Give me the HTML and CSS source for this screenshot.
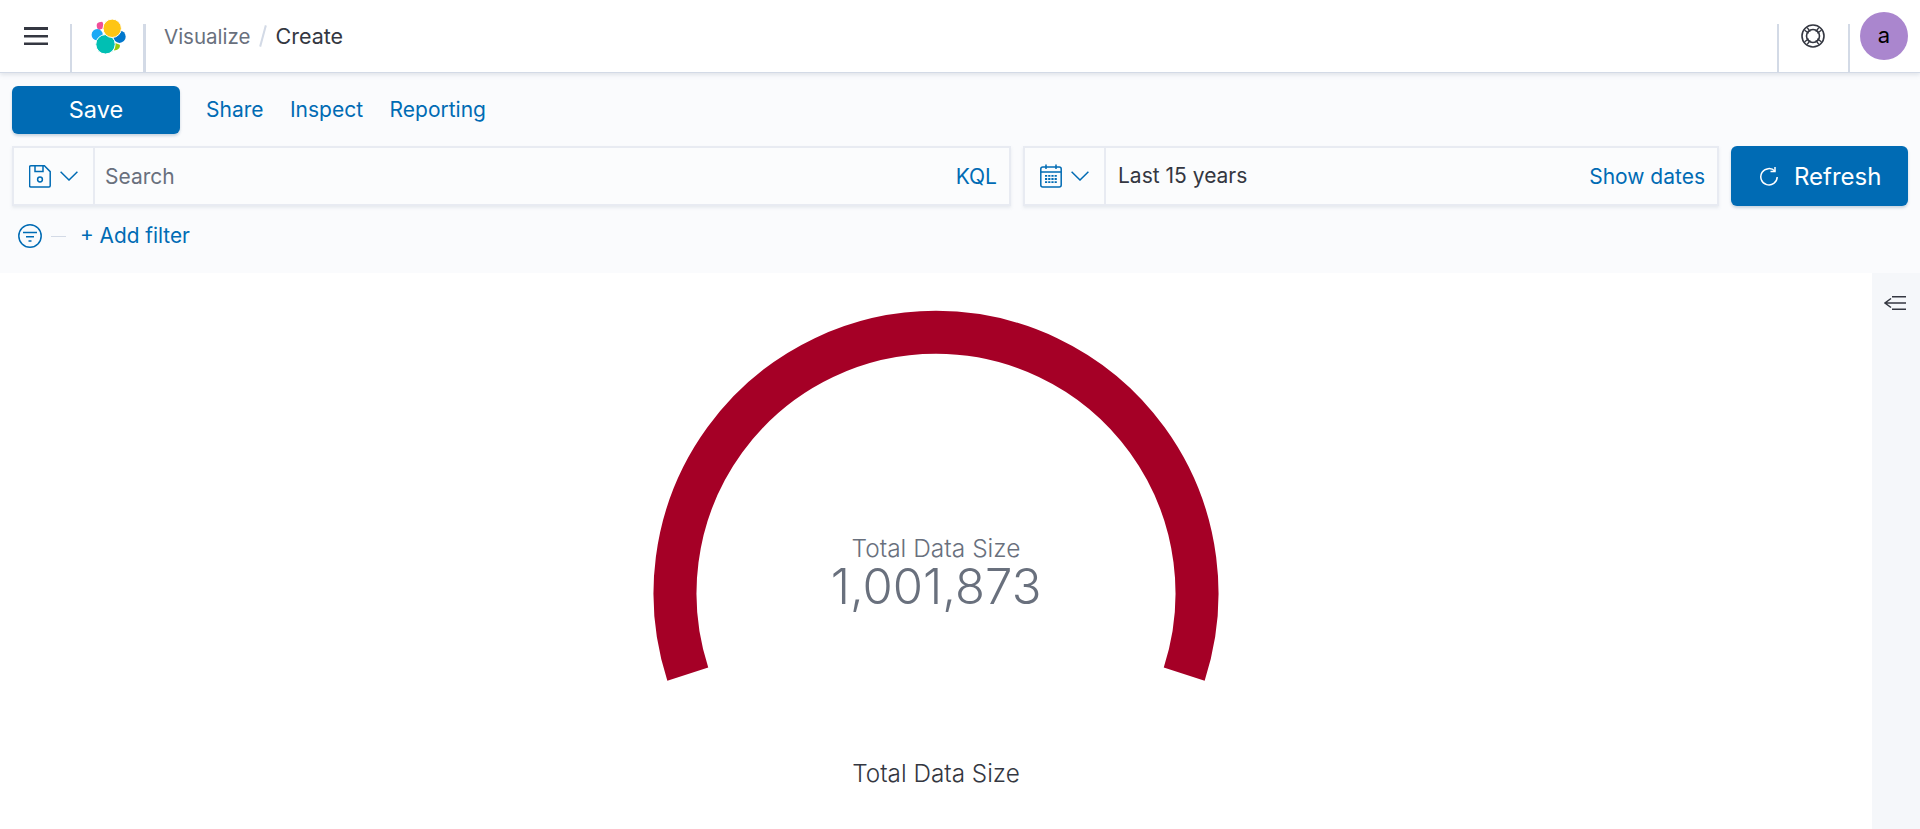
FILE: index.html
```html
<!DOCTYPE html>
<html>
  <head>
    <meta charset="utf-8" />
    <title>Visualize - Create</title>
    <link rel="stylesheet" href="styles.css">
  </head>
  <body>
    <header class="header">
      <div class="header-section menu-section">
        <svg class="icon" width="24" height="18" viewBox="0 0 24 18">
          <path d="M0 0h24v3H0zM0 8h24v2.6H0zM0 15.4h24V18H0z" fill="#343741"/>
        </svg>
      </div>
      <div class="header-section logo-section">
        <svg class="icon" width="36" height="36" viewBox="0 0 36 36">
          <path d="M6.7 7.4c0-1.5 1-2.8 2.4-3.1l3-.6c1 1 1.3 2.700 1.100 4.500l-.4 2.300-3.800 1.400c-1.400-.7-2.300-2.500-2.300-4.500z" fill="#f04e98"/>
          <circle cx="7.200" cy="16.700" r="5.600" fill="#1ba9f5"/>
          <circle cx="29.500" cy="18.700" r="6.200" fill="#0077cc"/>
          <path d="M24.500 24.800l5.300 1.900c.6 2.700-1.300 4.800-3.400 5.200l-2.400.5c.8-2.700.9-5 .5-7.600z" fill="#93c90e"/>
          <circle cx="15.500" cy="26.300" r="9.700" fill="#00bfb3" stroke="#fff"/>
          <circle cx="22.200" cy="10.300" r="9.200" fill="#fec514" stroke="#fff"/>
        </svg>
      </div>
      <nav class="breadcrumbs">
        <span class="crumb-parent">Visualize</span>
        <span class="crumb-sep"></span>
        <span class="crumb-current">Create</span>
      </nav>
      <div class="header-section help-section">
        <svg class="icon" width="24" height="24" viewBox="0 0 24 24" fill="none" stroke="#343741">
          <circle cx="12" cy="12" r="11" stroke-width="1.6"/>
          <circle cx="12" cy="12" r="6.5" stroke-width="1.6"/>
          <path d="M3.700 6.200l4 3M6.200 3.700l3 4M20.300 6.200l-4 3M17.800 3.700l-3 4M3.700 17.800l4-3M6.200 20.300l3-4M20.300 17.800l-4-3M17.800 20.300l-3-4" stroke-width="1.4"/>
        </svg>
      </div>
      <div class="header-section user-section">
        <div class="avatar">a</div>
      </div>
    </header>

    <section class="toolbar">
      <div class="menu-row">
        <button class="save-btn">Save</button>
        <a class="menu-link">Share</a>
        <a class="menu-link">Inspect</a>
        <a class="menu-link">Reporting</a>
      </div>

      <div class="query-row">
        <div class="field search-field">
          <div class="prepend">
            <svg width="22" height="23" viewBox="0 0 22 23" fill="none" stroke="#006bb4" stroke-width="1.5">
              <path d="M1.800.8h13.600l5.800 5.800v14.200a1.200 1.200 0 0 1-1.200 1.200H1.800a1.200 1.200 0 0 1-1.200-1.200V2a1.200 1.200 0 0 1 1.200-1.200z"/>
              <path d="M6 1v5.600h8V1"/>
              <circle cx="11" cy="14.500" r="2.400"/>
            </svg>
            <svg class="chevron" width="18" height="10" viewBox="0 0 18 10" fill="none" stroke="#006bb4" stroke-width="1.5">
              <path d="M.6.800L9 9l8.400-8.200"/>
            </svg>
          </div>
          <span class="search-text">Search</span>
          <a class="field-link">KQL</a>
        </div>

        <div class="field date-field">
          <div class="prepend">
            <svg width="22" height="24" viewBox="0 0 22 24" fill="none" stroke="#006bb4" stroke-width="1.5">
              <rect x=".8" y="3" width="20.400" height="20" rx="2"/>
              <path d="M1 8h20M6 .5v4.500M16 .5v4.500"/>
              <path d="M5 11.800h12M5 15h12M5 18.200h12" stroke-width="1.8" stroke-dasharray="2.200 1"/>
            </svg>
            <svg class="chevron" width="18" height="10" viewBox="0 0 18 10" fill="none" stroke="#006bb4" stroke-width="1.5">
              <path d="M.6.800L9 9l8.400-8.200"/>
            </svg>
          </div>
          <span class="date-text">Last 15 years</span>
          <a class="field-link">Show dates</a>
        </div>

        <button class="refresh-btn">
          <svg width="20" height="20" viewBox="0 0 20 20" fill="none" stroke="#fff" stroke-width="1.5">
            <path d="M16 1v4.500h-4.500"/>
            <path d="M16 5.200A8.200 8.200 0 1 0 18.200 11"/>
          </svg>
          <span>Refresh</span>
        </button>
      </div>

      <div class="filter-row">
        <svg width="24" height="24" viewBox="0 0 24 24" fill="none" stroke="#006bb4" stroke-width="1.5">
          <circle cx="12" cy="12" r="11.200"/>
          <path d="M5 8.500h14M8 12.800h8M10.500 17h3"/>
        </svg>
        <span class="filter-dash"></span>
        <a class="add-filter">+ Add filter</a>
      </div>
    </section>

    <main class="content">
      <div class="chart">
        <svg class="gauge" width="600" height="440" viewBox="0 0 600 440">
          <path d="M51.800 381.050A261 261 0 1 1 548.200 381.050" fill="none" stroke="#a50026" stroke-width="43"/>
          <text class="gauge-label" x="300" y="264" text-anchor="middle">Total Data Size</text>
          <text class="gauge-value" x="300" y="311" text-anchor="middle">1,001,873</text>
        </svg>
        <div class="chart-title">Total Data Size</div>
      </div>
      <aside class="legend">
        <svg width="22" height="14" viewBox="0 0 22 14" fill="none" stroke="#343741" stroke-width="1.5">
          <path d="M7 2.500L1 7l6 4.500M1 7h21M8 .8h14M8 13.200h14"/>
        </svg>
      </aside>
    </main>
  </body>
</html>
```

FILE: styles.css
```css
html, body {
  margin:0;
  padding:0;
  height:100%;
  background-color:#fff;
  font-family:Inter, "Liberation Sans", sans-serif;
  font-size:21px;
  color:#343741;
  overflow:hidden;
}

body {
  display:flex;
  flex-direction:column;
}

.header {
  display:flex;
  align-items:stretch;
  height:72px;
  background-color:#fff;
  border-bottom:1px solid #d3dae6;
  box-shadow:0 2px 4px rgba(152,162,179,0.25);
  position:relative;
}

.header-section {
  display:flex;
  align-items:center;
  justify-content:center;
  box-sizing:border-box;
  height:48px;
  margin-top:24px;
}

.icon {
  margin-top:-24px;
}

.menu-section {
  width:72px;
  padding-left:2px;
  border-right:2px solid #d3dae6;
}

.logo-section {
  width:74px;
  padding-left:1px;
  border-right:3px solid #d3dae6;
}

.breadcrumbs {
  flex:1;
  display:flex;
  align-items:center;
  padding-left:18px;
  font-size:20.5px;
}

.crumb-parent {
  color:#69707d;
}

.crumb-current {
  font-size:21.5px;
}

.crumb-sep {
  width:2px;
  height:22px;
  margin:0 11px 0 12px;
  background-color:#d3dae6;
  transform:rotate(15deg);
}

.help-section {
  width:73px;
  padding-right:2px;
  border-left:2px solid #d3dae6;
  border-right:2px solid #d3dae6;
}

.user-section {
  width:70px;
  height:72px;
  margin-top:0;
  justify-content:flex-end;
  padding-right:12px;
}

.avatar {
  width:48px;
  height:48px;
  border-radius:50%;
  background-color:#aa86ce;
  color:#000;
  font-size:22px;
  line-height:46px;
  text-align:center;
}

.toolbar {
  background-color:#fafbfd;
  padding:13px 12px 22px 12px;
}

.menu-row {
  display:flex;
  align-items:center;
  height:48px;
}

.save-btn {
  width:168px;
  height:48px;
  margin-right:26px;
  padding:0 0 2px 0;
  border:0;
  border-radius:6px;
  background-color:#006bb4;
  box-shadow:0 2px 3px rgba(0,60,110,0.2);
  color:#fff;
  font-family:inherit;
  font-size:23.5px;
}

.menu-link {
  margin-right:26.5px;
  padding-bottom:2px;
  color:#006bb4;
  font-size:21px;
}

.query-row {
  display:flex;
  align-items:center;
  margin-top:12px;
}

.field {
  display:flex;
  align-items:center;
  box-sizing:border-box;
  height:60px;
  background-color:#fbfcfd;
  border:2px solid #e8ebf2;
  box-shadow:0 2px 3px rgba(152,162,179,0.18);
}

.search-field {
  width:999px;
  margin-right:12px;
  padding-right:12px;
}

.date-field {
  width:696px;
  margin-right:12px;
  padding-right:12px;
}

.prepend {
  display:flex;
  align-items:center;
  box-sizing:border-box;
  height:56px;
  width:81px;
  padding-left:15px;
  border-right:2px solid #e8ebf2;
}

.chevron {
  margin-left:9px;
}

.search-text {
  flex:1;
  padding-left:10px;
  color:#69707d;
}

.date-text {
  flex:1;
  padding-left:12px;
  padding-bottom:1px;
  color:#343741;
  font-size:21px;
}

.field-link {
  color:#006bb4;
  font-size:21px;
}

.refresh-btn {
  display:flex;
  align-items:center;
  width:177px;
  height:60px;
  padding:0 0 0 28px;
  border:0;
  border-radius:6px;
  background-color:#006bb4;
  box-shadow:0 2px 3px rgba(0,60,110,0.2);
  color:#fff;
  font-family:inherit;
  font-size:24px;
}

.refresh-btn span {
  margin-left:15px;
}

.filter-row {
  display:flex;
  align-items:center;
  height:30px;
  margin-top:15px;
  padding-left:6px;
}

.filter-dash {
  width:15px;
  height:1px;
  margin:0 14px 0 9px;
  background-color:#d3dae6;
}

.add-filter {
  padding-bottom:2px;
  color:#006bb4;
  font-size:20.8px;
}

.content {
  flex:1;
  display:flex;
  min-height:0;
}

.chart {
  flex:1;
  display:flex;
  flex-direction:column;
  align-items:center;
  padding-top:20px;
}

.gauge {
  display:block;
}

.gauge-label {
  fill:#69707d;
  font-size:24.5px;
  font-weight:300;
}

.gauge-value {
  fill:#69707d;
  font-size:49px;
  font-weight:300;
}

.chart-title {
  margin-top:25px;
  line-height:30px;
  font-size:24.3px;
  font-weight:300;
  color:#343741;
}

.legend {
  box-sizing:border-box;
  width:48px;
  background-color:#f5f7fa;
  display:flex;
  justify-content:center;
  align-items:flex-start;
  padding:23px 2px 0 0;
}
```
